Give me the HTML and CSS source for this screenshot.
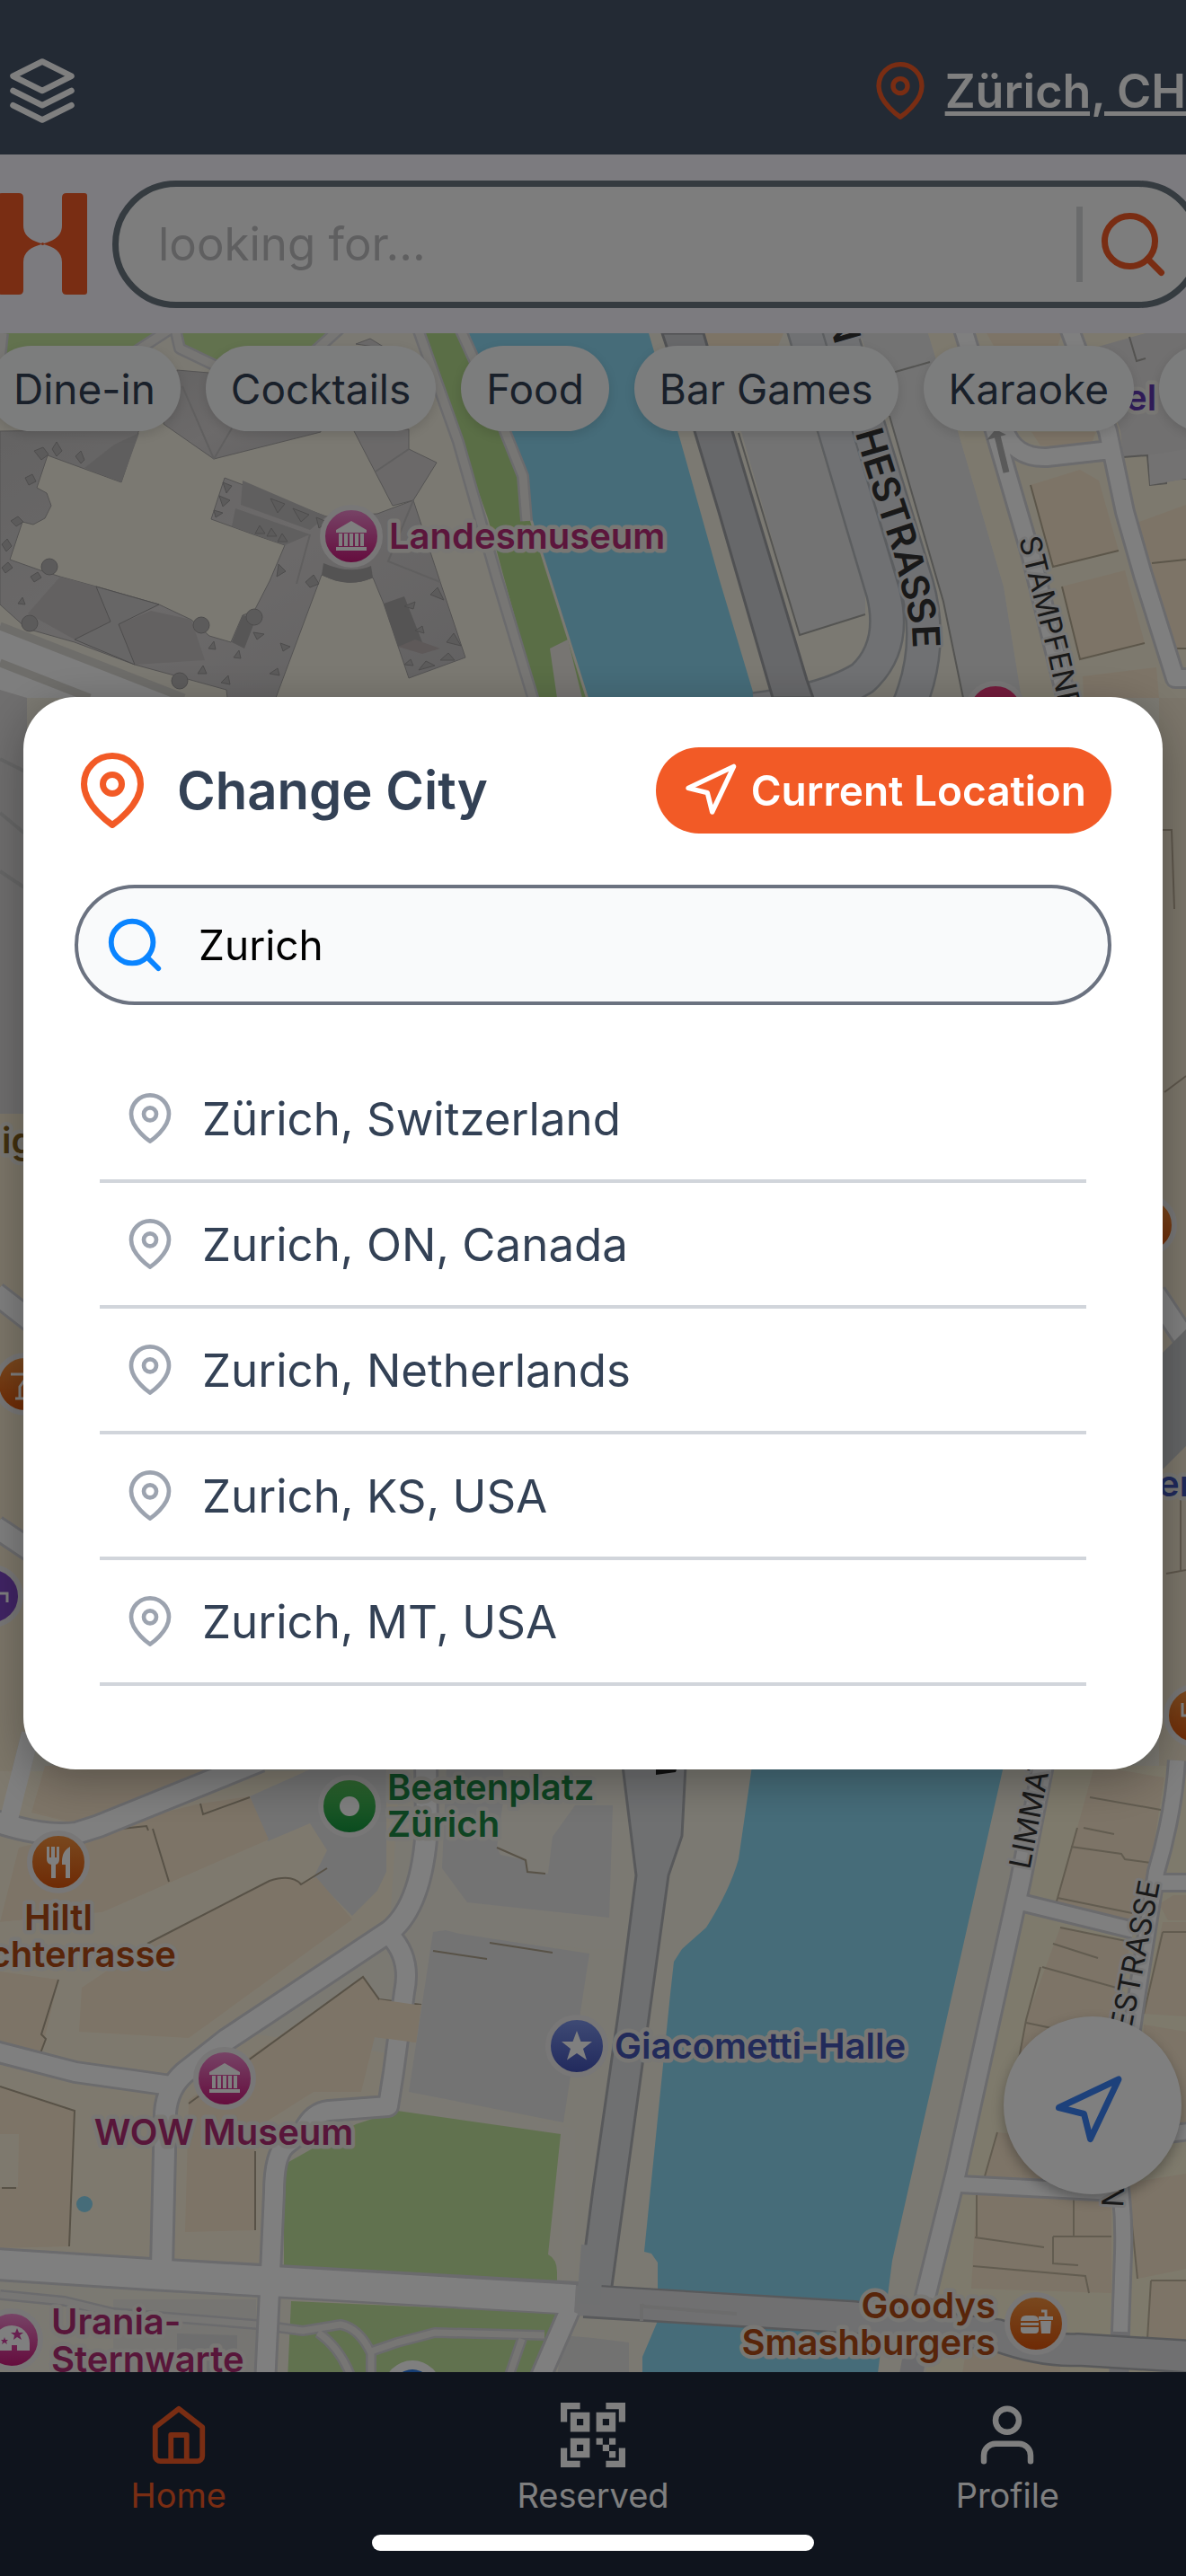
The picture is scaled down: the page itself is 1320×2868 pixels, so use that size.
FILE: index.html
```html
<!DOCTYPE html>
<html lang="en">
<head>
<meta charset="utf-8">
<meta name="viewport" content="width=device-width, initial-scale=1">
<title>Change City</title>
<link rel="stylesheet" href="styles.css">
</head>
<body>
<svg class="defs" aria-hidden="true">
  <defs>
    <symbol id="pin" viewBox="0 0 24 24"><path d="M21 10c0 7-9 13-9 13s-9-6-9-13a9 9 0 0 1 18 0z"/><circle cx="12" cy="10" r="3"/></symbol>
    <symbol id="search" viewBox="0 0 24 24"><circle cx="11" cy="11" r="8"/><path d="M21 21l-4.35-4.35"/></symbol>
    <symbol id="arrow" viewBox="0 0 24 24"><path d="M3 11L22 2L13 21L11 13Z"/></symbol>
    <linearGradient id="g-pink" x1="0" y1="0" x2="0" y2="1"><stop offset="0" stop-color="#f08cd0"/><stop offset="1" stop-color="#c81478"/></linearGradient>
    <linearGradient id="g-orange" x1="0" y1="0" x2="0" y2="1"><stop offset="0" stop-color="#f49440"/><stop offset="1" stop-color="#dc5208"/></linearGradient>
    <linearGradient id="g-green" x1="0" y1="0" x2="0" y2="1"><stop offset="0" stop-color="#60cc60"/><stop offset="1" stop-color="#10943c"/></linearGradient>
    <linearGradient id="g-blue" x1="0" y1="0" x2="0" y2="1"><stop offset="0" stop-color="#8098ec"/><stop offset="1" stop-color="#4050b8"/></linearGradient>
    <linearGradient id="g-roof" x1="0" y1="0" x2="1" y2="1"><stop offset="0" stop-color="#c8c6c6"/><stop offset=".5" stop-color="#d8d4d4"/><stop offset="1" stop-color="#c4c2c3"/></linearGradient>
    <symbol id="museum" viewBox="-20 -20 40 40"><path fill="#fff" d="M0-18L17-8V-5H-17V-8ZM-14-4h4v14h-4zM-8-4h4v14h-4zM-2-4h4v14h-4zM4-4h4v14h-4zM10-4h4v14h-4zM-17 11H17V15H-17Z"/></symbol>
    <path id="p-hestrasse" d="M943 452L962 517L978 567L995 618L1006 665L1015 698L1018 760"/>
    <path id="p-stampfen" d="M1134 600L1150 665L1166 728L1182 800L1200 890"/>
  </defs>
</svg>

<div class="app">
  <header class="topbar">
    <button class="icon-btn" aria-label="Layers">
      <svg class="icon icon-lg" viewBox="0 0 24 24"><path d="M12 2L2 7l10 5 10-5z"/><path d="M2 12l10 5 10-5"/><path d="M2 17l10 5 10-5"/></svg>
    </button>
    <a class="city" href="#city"><svg class="icon icon-md accent"><use href="#pin"/></svg><span>Zürich, CH</span></a>
  </header>

  <form class="searchbar">
    <svg class="logo" viewBox="0 0 99 113" aria-hidden="true"><path d="M0 4Q0 0 4 0H23Q28 0 28 5V36C28 48 37 53 49.500 56.500C62 53 71 48 71 36V5Q71 0 76 0H96Q99 0 99 3V110Q99 113 96 113H76Q71 113 71 108V77C71 65 62 60 49.500 56.500C37 60 28 65 28 77V108Q28 113 23 113H4Q0 113 0 109Z"/><circle cx="49.500" cy="56.500" r="1.500"/></svg>
    <div class="searchbox">
      <input type="text" placeholder="looking for..." aria-label="Search places">
      <button type="button" class="search-go" aria-label="Search"><svg class="icon icon-xl accent"><use href="#search"/></svg></button>
    </div>
  </form>

  <main class="map">
    <svg class="map-art" viewBox="0 371 1320 2270" preserveAspectRatio="xMidYMin slice" role="img" aria-label="Map of Zürich">
      <rect y="371" width="1320" height="2270" fill="#f6f2e4"/>

      <!-- parks north -->
      <g fill="#c4e49c">
        <path d="M5 371H185L150 392L0 430V371Z"/>
        <path d="M197 371H380L345 400L250 415L200 390Z"/>
        <path fill="#b4dc8c" d="M473 371H508L539 443L581 533L589 577L652 777H598L560 640L543 577L513 492Z"/>
      </g>
      <path d="M612 722l20-10 16 65h-28z" fill="#eeeae4"/>

      <!-- Limmat north -->
      <path d="M522 371L566 493L589 567L655 777H840L800 643L758 493L722 371Z" fill="#8cd8f2"/>

      <!-- footpaths north -->
      <g class="road-case"><path stroke-width="14" d="M0 400L3 371M150 392L190 366M195 366L200 388L250 412M345 396L378 366M465 366L510 492L552 640L594 780M512 366L548 445L582 530L586 580"/></g>
      <g class="road-fill"><path stroke="#f2f0ea" stroke-width="9" d="M0 400L3 371M150 392L190 366M195 366L200 388L250 412M345 396L378 366M465 366L510 492L552 640L594 780M512 366L548 445L582 530L586 580"/></g>

      <!-- railway yard -->
      <path d="M0 695L205 777H0Z" fill="#fcfcfc"/>
      <path d="M0 697L205 777M0 738L100 777" fill="none" stroke="#dcdad4" stroke-width="9"/>
      <path d="M0 768L30 777V1240H0Z" fill="#dedcdc"/>
      <path d="M0 845L30 860M0 905L30 930M0 970L30 990" fill="none" stroke="#cccccc" stroke-width="4"/>

      <!-- museum roofs -->
      <g fill="url(#g-roof)" stroke="#a8a6a6" stroke-width="1">
        <path d="M182 472L238 511L357 481L350 425L197 412Z"/>
        <path fill="#d6d3d3" d="M393 478L437 563L460 557L486 515L455 500V478ZM396 383L412 377L430 388Z"/>
        <path d="M0 480L155 478L135 537L53 507L41 543L52 549L57 563L50 577L37 584L25 581L11 623L45 635L67 642L107 653L177 673L213 690L233 708L257 715L270 685L283 680L300 647L317 607L282 595L235 578L250 532L297 550L363 575L420 572L460 557L490 648L518 732L455 755L427 672L415 643Q388 655 358 640L307 777H253L252 768L205 755L150 740L83 715L30 700L0 673Z"/>
      </g>
      <path d="M94 521L127 495L155 482L135 537Z" fill="#bfbdbd"/>
      <path d="M31 683L67 642L107 653L123 692L83 712Z" fill="#c6c2c2"/>
      <path d="M132 695L168 680L213 690L228 735L150 740Z" fill="#c6c2c2"/>
      <path d="M107 653L123 692L83 712L150 740L132 695L177 673Z" fill="#cfcdcd" stroke="#9a9898" stroke-width="1"/>
      <path d="M262 566L345 595L317 607L258 586ZM270 535L363 575L345 590L268 562Z" fill="#c0bebe"/>
      <path d="M427 672L450 664L470 715L443 720Z" fill="#aaa8a8"/>
      <path d="M443 720L462 712L490 722L470 728Z" fill="#bcb2b2"/>
      <path d="M360 627Q390 640 413 630L415 643Q388 656 358 640Z" fill="#a8a6a6"/>
      <path d="M270 685L285 688L272 722L258 715Z" fill="#aeacac"/>
      <path d="M238 511L203 430M238 511L262 470M455 500L418 525M460 557L432 625L490 648M345 595L330 650" fill="none" stroke="#c0bebe" stroke-width="2"/>
      <g fill="#b8b6b6" stroke="#9c9a9a" stroke-width="1">
        <circle cx="55" cy="631" r="9"/><circle cx="33" cy="694" r="9"/><circle cx="224" cy="696" r="9"/><circle cx="200" cy="758" r="9"/><circle cx="283" cy="687" r="9"/>
        <path d="M38 502l10-4 6 8-8 6zM58 500l5-8 6 10-6 6zM84 508l6-6 4 10-4 4zM28 532l8-4 4 8-8 4zM12 580l8-5 6 6-8 5zM2 606l6-6 5 8-6 6zM2 632l7-6 5 6-8 6zM34 642l8-5 4 6-8 5zM20 672l5-7 3 8z"/>
        <path d="M248 537l10 4-6 8zM244 552l12 5-8 7zM238 568l10 3-8 5zM301 555l16 6-8 10zM326 566l18 7-9 8zM352 576l12 5-9 7zM284 594l5-9 6 9zM297 597l5-9 6 9zM309 603l5-9 6 9zM310 628l8 8-10 6zM340 648l9-8 6 10-10 4z"/>
        <path d="M282 704l12 2-8 6zM312 716l11 4-8 5zM300 750l9-6 2 8zM246 760l8-8 2 10zM220 750l6-9 4 9zM232 722l6-8 2 9zM260 732l6-8 2 9zM479 662l8-8 7 14zM450 675l12-5-2 8zM462 702l8-5 2 8zM497 715l8-10 8 14zM450 740l7-6 3 7zM466 746l8-10 10 5zM490 735l9-8 7 8z"/>
      </g>

      <!-- Sihlquai streets and blocks -->
      <path d="M783 371H872L862 395L795 400Z" fill="#fae8cc"/>
      <path d="M957 371H1033L1067 483L1117 653L1137 777H1072L1050 670L990 463Z" fill="#e6e6e6"/>
      <path d="M822 470H905L963 660V684L890 707Z" fill="#e6e6e6"/>
      <path d="M822 482L890 707L963 684M990 463L1050 670L1072 777M993 415L1035 403" fill="none" stroke="#a8a8a4" stroke-width="2"/>
      <g fill="none" stroke="#b8bcc0" stroke-linejoin="round">
        <path stroke-width="40" d="M893 360L930 482L983 660Q998 720 960 755Q920 780 840 790"/>
        <path stroke-width="40" d="M932 360L968 480L1020 650Q1040 720 1010 790"/>
      </g>
      <g fill="none" stroke="#e0e2e6" stroke-linejoin="round">
        <path stroke-width="35" d="M893 360L930 482L983 660Q998 720 960 755Q920 780 840 790"/>
        <path stroke-width="35" d="M932 360L968 480L1020 650Q1040 720 1010 790"/>
      </g>
      <path d="M737 371H783L815 480L898 757L905 777H860L800 570L773 480Z" fill="#cfd0d4" stroke="#a0a2a6" stroke-width="3"/>

      <!-- east blocks north -->
      <path d="M1033 371H1320V777H1137L1117 653L1067 483Z" fill="#fbf3dc"/>
      <path d="M1215 388L1275 371H1320V533L1280 540L1277 507L1250 509L1247 480Z" fill="#e2e0e0"/>
      <path d="M1250 509L1277 507L1280 540L1298 538V533H1320M1257 375L1265 402L1275 399" fill="none" stroke="#a8a6a2" stroke-width="2"/>
      <path d="M1278 507L1320 500V533L1280 540Z" fill="#e6e4e4"/>
      <g class="beige">
        <path d="M1098 371H1182L1175 392H1110ZM1148 481H1220L1215 493L1190 498L1158 496ZM1147 540L1202 523L1223 535L1245 613L1172 631ZM1182 653L1252 635L1274 716L1202 734ZM1205 753L1287 743L1290 777H1206ZM1265 582L1320 562V720L1305 722L1282 640Z"/>
      </g>
      <path d="M1147 540L1172 631L1245 613M1182 653L1202 734L1274 716M1265 582L1282 640L1305 722H1320M1282 627L1320 623" fill="none" stroke="#b8ac94" stroke-width="2"/>
      <g class="road-case"><path stroke-width="24" d="M1070 360L1108 483L1148 620L1190 790M1118 478Q1128 510 1165 509L1245 500M1188 360L1233 480L1252 570L1272 640L1308 755H1330"/></g>
      <g class="road-fill"><path stroke-width="18" d="M1070 360L1108 483L1148 620L1190 790M1118 478Q1128 510 1165 509L1245 500M1188 360L1233 480L1252 570L1272 640L1308 755H1330"/></g>
      <path d="M1120 526L1110 485" fill="none" stroke="#b4b4b4" stroke-width="7"/><path d="M1098 490L1108 478L1120 484Z" fill="#b4b4b4"/>

      <!-- middle, either side -->
      <path d="M0 1240H30V1990H0Z" fill="#f8ecd2"/>
      <path d="M1290 777H1320V1990H1290Z" fill="#f6ebd4"/>
      <g class="road-case"><path stroke-width="28" d="M-5 1440L40 1475M-5 1700L40 1730M1285 1440L1325 1500"/><path stroke-width="20" d="M10 2025L34 1930"/></g>
      <g class="road-fill"><path stroke-width="22" d="M-5 1440L40 1475M-5 1700L40 1730M1285 1440L1325 1500"/></g>
      <path d="M1290 1510L1320 1480V1610L1290 1640Z" fill="#c8cacc"/>
      <path d="M1294 924H1304L1307 1012M1296 1216L1320 1198M1314 1660V1750M1298 1752L1320 1748" fill="none" stroke="#bcae98" stroke-width="2"/>

      <!-- south-west blocks -->
      <path d="M0 1972H445L434 2140L250 2260L460 2290L430 2345L340 2365L300 2400V2530L0 2520Z" fill="#fdf3dc"/>
      <path d="M278 2000L354 1966H430V2084L420 2105L392 2133L349 2090L364 2060L345 2030L298 2050Z" fill="#e6e6e6"/>
      <path d="M430 1966H690V2170H655L482 2151L470 2330L640 2370V2540L625 2544V2380L442 2350L448 2180L434 2150L470 2060Z" fill="#f6f2e6"/>
      <g fill="#e6e6e6">
        <path d="M497 1966H560V2005L553 2057L557 2065L585 2071L587 2084L610 2086L615 2045L640 2010H682L678 2135L520 2118L492 2080Z"/>
        <path d="M482 2151L496 2149L512 2153L656 2175L627 2363L455 2329Z"/>
      </g>
      <g class="beige">
        <path d="M50 1966H250L90 2032L35 2018ZM21 2057L223 2008L278 2000L299 2048L114 2129L0 2140ZM164 2164L300 2094Q325 2086 337 2097L352 2090L392 2137L210 2269L88 2262L91 2213ZM0 2195L65 2204L46 2285L0 2276ZM210 2338L404 2201L422 2226L469 2232L463 2274L417 2268L402 2329H349L284 2370V2483L206 2485ZM0 2323L83 2350L77 2501L0 2503Z"/>
      </g>
      <path d="M114 2129L0 2140V2170L164 2164L300 2094L265 2063Z" fill="#fdf3dc"/>
      <path d="M0 2376H21L20 2435H0Z" fill="#fdf3dc"/>
      <path d="M164 2164L300 2094Q325 2086 335 2098L364 2080M98 2040L163 2033L165 2038M223 2008L226 2020L278 2001M170 2036L188 2095M0 2323L83 2350L77 2501M284 2395V2483M210 2342L404 2201L422 2226L469 2232M65 2204L46 2265L51 2270L45 2286M482 2172L542 2181M545 2163L615 2174M553 2057L585 2071L587 2084L607 2086M2 2436H18" fill="none" stroke="#b0a48e" stroke-width="2"/>

      <!-- parks south -->
      <g fill="#c2e49e">
        <path d="M442 2350L624 2376L610 2510Q620 2515 620 2530V2544L316 2530V2410L396 2365Z"/>
        <path d="M324 2562L619 2575L589 2650H320Z"/>
      </g>
      <path d="M126 2560H285V2650H126Z" fill="#ecebe4"/><path d="M197 2598L264 2600V2650H197Z" fill="#dcdcdc"/>
      <path d="M625 2600L660 2603L700 2608V2650H620Z" fill="#e4e4e2"/>

      <!-- footpaths south -->
      <g class="road-case"><path stroke-width="12" d="M0 2555L72 2562L126 2575L286 2588L337 2595L379 2588Q400 2592 413 2620V2650M413 2618L442 2608L484 2597L606 2600M354 2597Q380 2615 392 2650M581 2604L565 2650"/></g>
      <g class="road-fill"><path stroke="#e2e2de" stroke-width="7" d="M0 2555L72 2562L126 2575L286 2588L337 2595L379 2588Q400 2592 413 2620V2650M413 2618L442 2608L484 2597L606 2600M354 2597Q380 2615 392 2650M581 2604L565 2650"/></g>

      <!-- Limmat south -->
      <path d="M837 1966L822 2070Q812 2105 786 2146L759 2170L750 2184L746 2220L717 2507L725 2509L732 2519V2584L715 2624V2650H976L993 2517L1117 1966Z" fill="#8cd8f2"/>

      <!-- east blocks south -->
      <path d="M1157 1966H1320V2650H1030L1040 2557L1074 2419Z" fill="#fcf4d8"/>
      <g class="beige">
        <path d="M1218 1966L1296 1979L1281 2073L1279 2146L1174 2124L1199 2035ZM1180 2146L1258 2162L1243 2254L1228 2350H1123L1142 2249ZM1110 2374L1169 2380V2428L1096 2423ZM1087 2441L1237 2448V2553L1081 2548ZM1294 2140H1320V2245L1273 2242ZM1273 2254L1320 2262V2380L1270 2400ZM1257 2430L1320 2420V2526L1266 2537ZM1281 2539H1320V2604H1277ZM1290 2120L1306 2110H1320V2138H1300ZM1078 2598L1180 2626V2650H1070Z"/>
      </g>
      <path d="M1213 2001L1292 2015M1206 2035L1240 2042M1192 2056L1248 2064L1252 2070L1281 2074M1177 2113L1260 2130M1180 2146L1258 2162M1172 2164L1222 2180M1160 2190L1246 2214M1199 2035L1174 2124M1158 2190L1142 2249L1123 2352M1142 2252L1180 2260M1110 2374L1096 2423M1087 2441V2490M1085 2491L1162 2502M1195 2441V2490M1172 2490H1237M1172 2490V2520L1200 2522M1083 2523L1208 2534L1212 2553M1294 2151H1320M1294 2151L1273 2242M1281 2539H1320M1281 2539L1277 2604M1257 2448L1266 2537" fill="none" stroke="#c4b8a0" stroke-width="2"/>

      <!-- streets south -->
      <path d="M693 1966L708 2088L689 2236L660 2437L644 2560H679L744 2088L759 2044L763 1966Z" fill="#dee0e3" stroke="#b0b2b6" stroke-width="3"/>
      <path d="M730 1966L753 1970L752 1973L730 1976Z" fill="#222"/>
      <g class="road-case">
        <path stroke-width="28" d="M-5 2028Q50 2046 85 2041L110 2033L290 1960M474 1960L475 2035Q470 2120 434 2150L252 2271L205 2308Q186 2325 184 2352L180 2525"/>
        <path stroke-width="26" d="M434 2155Q458 2180 450 2218L438 2307L432 2345L366 2350Q348 2352 338 2372L318 2388Q305 2400 305 2441L301 2530L295 2655M-5 2284L84 2307L190 2322"/>
        <path stroke-width="38" d="M-5 2521L168 2532L660 2560"/>
        <path stroke-width="26" d="M634 2572L598 2655M1162 1960L1136 2093L1064 2419L1030 2557L1012 2655"/>
        <path stroke-width="22" d="M1136 2118L1262 2149M1068 2432L1241 2441M1310 1960Q1306 2020 1287 2084L1266 2218L1240 2396Q1252 2450 1250 2508L1245 2655M1290 2096H1330M1300 2376L1330 2372"/>
      </g>
      <path d="M650 2562L950 2580L1110 2600Q1160 2618 1200 2616L1330 2624" fill="none" stroke="#b0b2b6" stroke-width="38"/>
      <path d="M640 2561L950 2580L1110 2600Q1160 2618 1200 2616L1330 2624" fill="none" stroke="#e0e1e3" stroke-width="33"/>
      <path d="M660 2500L655 2565" stroke="#dee0e3" stroke-width="26" fill="none"/>
      <g class="road-fill">
        <path stroke-width="22" d="M-5 2028Q50 2046 85 2041L110 2033L290 1960M474 1960L475 2035Q470 2120 434 2150L252 2271L205 2308Q186 2325 184 2352L180 2525"/>
        <path stroke-width="20" d="M434 2155Q458 2180 450 2218L438 2307L432 2345L366 2350Q348 2352 338 2372L318 2388Q305 2400 305 2441L301 2530L295 2655M-5 2284L84 2307L190 2322M10 2025L34 1930"/>
        <path stroke-width="32" d="M-5 2521L168 2532L640 2560"/>
        <path stroke-width="20" d="M634 2572L598 2655M1162 1960L1136 2093L1064 2419L1030 2557"/>
        <path stroke-width="16" d="M1136 2118L1262 2149M1068 2432L1241 2441M1310 1960Q1306 2020 1287 2084L1266 2218L1240 2396Q1252 2450 1250 2508L1247 2596M1290 2096H1330M1300 2376L1330 2372"/>
      </g>
      <path d="M463 2232L469 2232L463 2274L417 2268L422 2226Z" class="beige"/>
      <path d="M714 2584V2565M714 2566L718 2568L820 2576" fill="none" stroke="#d8d8d8" stroke-width="4"/>
      <circle cx="94" cy="2454" r="9" fill="#8cd8f2"/>
      <circle cx="459" cy="2660" r="32" fill="#fff"/><circle cx="459" cy="2660" r="22" fill="#2c7ce8"/>

      <!-- street names -->
      <g class="street">
        <text class="street-lg"><textPath href="#p-hestrasse">CHESTRASSE</textPath></text>
        <text class="street-lg" transform="translate(921 354) rotate(74)">N</text>
        <text><textPath href="#p-stampfen">STAMPFENBACH</textPath></text>
        <text transform="translate(1146 2082) rotate(-79)">LIMMAT</text>
        <text transform="translate(1291 2096) rotate(-79)" text-anchor="end">GESTRASSE</text>
        <text transform="translate(1250 2458) rotate(-87)">N</text>
      </g>

      <!-- place markers -->
      <g class="marker">
        <circle cx="391" cy="597" r="32" fill="url(#g-pink)"/><use href="#museum" x="371" y="578" width="40" height="40"/>
        <circle cx="1108" cy="793" r="32" fill="#e83878"/>
        <circle cx="1275" cy="1364" r="32" fill="url(#g-orange)"/>
        <circle cx="28" cy="1541" r="32" fill="url(#g-orange)"/><path class="line" d="M12 1530h20l-10 14v12M17 1557h10"/>
        <circle cx="-9" cy="1777" r="32" fill="#8048c8"/><path class="line" d="M-4 1774h12v10"/>
        <circle cx="1330" cy="1910" r="32" fill="url(#g-orange)"/><path class="line" d="M1316 1896v14h8"/>
        <circle cx="389" cy="2011" r="32" fill="url(#g-green)"/><circle class="glyph" cx="389" cy="2011" r="11"/>
        <circle cx="65" cy="2073" r="32" fill="url(#g-orange)"/>
        <path class="glyph" d="M52 2056h3v12h2v-12h4v12h2v-12h3v14q0 5-4 6v15h-5v-15q-5-1-5-6zM78 2056v35h-5v-15h-4q-1-15 9-20z"/>
        <circle cx="250" cy="2314" r="32" fill="url(#g-pink)"/><use href="#museum" x="230" y="2295" width="40" height="40"/>
        <circle cx="642" cy="2278" r="32" fill="url(#g-blue)"/><path class="glyph" d="M642 2261l4.500 12h12.500l-10 8 4 12.500-11-7.500-11 7.500 4-12.500-10-8h12.500z"/>
        <circle cx="13" cy="2605" r="32" fill="url(#g-pink)"/>
        <path class="glyph" d="M-7 2617v-8a20 20 0 0 1 40 0v8h-14v-6h-6v6z"/><path fill="#d040a0" d="M19 2592l2 5h5l-4 3 2 5-5-3-4 3 1-5-4-3h5zM5 2602l1 3h3l-2 2 1 3-3-2-3 2 1-3-2-2h3z"/>
        <circle cx="1153" cy="2587" r="32" fill="url(#g-orange)"/>
        <path class="glyph" d="M1136 2584q0-6 6-6h8q6 0 6 6zM1136 2586h20v3h-20zM1136 2591h20v3q0 4-4 4h-12q-4 0-4-4zM1156 2579h16v4h-16zM1158 2584h12l-1 14h-10z"/><path class="line" d="M1164 2579v-6h-5"/>
      </g>

      <!-- place names -->
      <g class="place">
        <text x="433" y="611" fill="#b82c78">Landesmuseum</text>
        <text x="1253" y="457" fill="#6038b0">el</text>
        <text x="2" y="1284" fill="#84601c">ig</text>
        <text x="1289" y="1666" fill="#4054b8">en</text>
        <text x="431" y="2004" fill="#1c8844">Beatenplatz</text>
        <text x="431" y="2045" fill="#1c8844">Zürich</text>
        <text x="65" y="2149" fill="#b04a14" text-anchor="middle">Hiltl</text>
        <text x="196" y="2190" fill="#b04a14" text-anchor="end">Dachterrasse</text>
        <text x="249" y="2388" fill="#b02c74" text-anchor="middle">WOW Museum</text>
        <text x="684" y="2292" fill="#4456b4">Giacometti-Halle</text>
        <text x="57" y="2599" fill="#b02c74">Urania-</text>
        <text x="57" y="2641" fill="#b02c74">Sternwarte</text>
        <text x="1108" y="2581" fill="#b04a14" text-anchor="end">Goodys</text>
        <text x="1108" y="2622" fill="#b04a14" text-anchor="end">Smashburgers</text>
      </g>
    </svg>

    <div class="chips">
      <button>Dine-in</button>
      <button>Cocktails</button>
      <button>Food</button>
      <button>Bar Games</button>
      <button>Karaoke</button>
      <button>Live Music</button>
    </div>
    <button class="locate" aria-label="My location"><svg class="icon icon-xl"><use href="#arrow"/></svg></button>
  </main>

  <nav class="tabs">
    <a class="active" href="#home">
      <svg class="icon icon-tab" viewBox="0 0 24 24"><path d="M3 9l9-7 9 7v11a2 2 0 0 1-2 2H5a2 2 0 0 1-2-2z"/><path d="M9 22V12h6v10"/></svg>
      <span>Home</span>
    </a>
    <a href="#reserved">
      <svg class="icon-qr" viewBox="0 0 20 20"><path fill-rule="evenodd" d="M0 0H6V2H2V6H0ZM14 0H20V6H18V2H14ZM0 14H2V18H6V20H0ZM18 14H20V20H14V18H18ZM3 3H9V9H3ZM5 5V7H7V5ZM11 3H17V9H11ZM13 5V7H15V5ZM3 11H9V17H3ZM5 13V15H7V13ZM11 11H13V13H11ZM15 11H17V13H15ZM13 13H15V15H13ZM15 15H17V17H15Z"/></svg>
      <span>Reserved</span>
    </a>
    <a href="#profile">
      <svg class="icon icon-lg" viewBox="0 0 24 24"><path d="M20 21v-2a4 4 0 0 0-4-4H8a4 4 0 0 0-4 4v2"/><circle cx="12" cy="7" r="4"/></svg>
      <span>Profile</span>
    </a>
  </nav>
</div>

<div class="scrim">
  <section class="dialog" role="dialog" aria-modal="true" aria-labelledby="dialog-title">
    <div class="dialog-head">
      <svg class="icon icon-xl"><use href="#pin"/></svg>
      <h1 id="dialog-title">Change City</h1>
      <button class="current"><svg class="icon icon-md"><use href="#arrow"/></svg>Current Location</button>
    </div>
    <label class="field">
      <svg class="icon icon-tab"><use href="#search"/></svg>
      <input type="text" value="Zurich" aria-label="City">
    </label>
    <ul class="results">
      <li><button><svg class="icon icon-sm"><use href="#pin"/></svg>Zürich, Switzerland</button></li>
      <li><button><svg class="icon icon-sm"><use href="#pin"/></svg>Zurich, ON, Canada</button></li>
      <li><button><svg class="icon icon-sm"><use href="#pin"/></svg>Zurich, Netherlands</button></li>
      <li><button><svg class="icon icon-sm"><use href="#pin"/></svg>Zurich, KS, USA</button></li>
      <li><button><svg class="icon icon-sm"><use href="#pin"/></svg>Zurich, MT, USA</button></li>
    </ul>
  </section>
  <div class="home-indicator"></div>
</div>
</body>
</html>
```

FILE: styles.css
```css
* {
  box-sizing: border-box;
}

body {
  margin: 0;
  font-family: Inter, "Liberation Sans", sans-serif;
  color: #334155;
}

button,
input {
  font: inherit;
  color: inherit;
  border: 0;
  padding: 0;
  background: none;
}

input {
  min-width: 0;
  outline: 0;
}

a {
  color: inherit;
  text-decoration: none;
}

.defs {
  position: absolute;
  width: 0;
  height: 0;
}

.icon {
  flex: none;
  display: block;
  fill: none;
  stroke: currentColor;
  stroke-width: 2;
  stroke-linecap: round;
  stroke-linejoin: round;
}

.icon-sm { width: 56px; height: 56px; }
.icon-md { width: 64px; height: 64px; }
.icon-tab { width: 70px; height: 70px; }
.icon-lg { width: 78px; height: 78px; }
.icon-xl { width: 84px; height: 84px; }

.accent {
  color: #f25a26;
}

/* Page behind the dialog */

.app {
  display: flex;
  flex-direction: column;
  min-height: 100vh;
  overflow: hidden;
}

.topbar {
  display: flex;
  align-items: flex-end;
  justify-content: space-between;
  height: 172px;
  padding: 0 0 32px 8px;
  background: #475569;
  color: #fff;
}

.city {
  display: flex;
  align-items: center;
  gap: 18px;
  height: 78px;
  font-size: 52px;
  font-weight: 600;
  white-space: nowrap;
}

.city span {
  text-decoration: underline;
  text-decoration-thickness: 5px;
  text-underline-offset: 4px;
}

.searchbar {
  display: flex;
  align-items: center;
  gap: 28px;
  height: 199px;
  margin: 0 -18px 0 -2px;
  background: #f9f6ff;
}

.logo {
  flex: none;
  width: 99px;
  height: 113px;
  fill: #f25a26;
}

.searchbox {
  flex: 1;
  display: flex;
  align-items: center;
  height: 142px;
  padding: 0 28px 0 44px;
  border: 7px solid #6a7680;
  border-radius: 71px;
  background: #fafafa;
  font-size: 51px;
}

.searchbox input {
  flex: 1;
}

.searchbox input::placeholder {
  color: #bebec0;
  opacity: 1;
}

.search-go {
  padding: 0 0 0 14px;
  border-left: 7px solid #d4d6d9;
}

.map {
  position: relative;
  flex: 1;
  overflow: hidden;
}

.map-art {
  position: absolute;
  inset: 0;
  width: 100%;
  height: 100%;
}

.road-case path,
.road-fill path {
  fill: none;
  stroke-linejoin: round;
}

.road-case path { stroke: #d6d6da; }
.road-fill path { stroke: #fff; }
.road-fill path[stroke] { stroke: #efede8; }
.beige { fill: #fae8ce; }

.street text {
  font-size: 33px;
  fill: #333;
  stroke: #eeeeee;
  stroke-width: 6px;
  stroke-linejoin: round;
  paint-order: stroke;
}

.street .street-lg {
  font-size: 42px;
  font-weight: 600;
  stroke: #e0e2e6;
}

.marker > circle {
  stroke: #f0eeee;
  stroke-width: 6px;
}

.marker .glyph {
  fill: #fff;
  stroke: none;
}

.marker .line {
  fill: none;
  stroke: #fff;
  stroke-width: 3px;
}

.place text {
  font-size: 40px;
  font-weight: 600;
  stroke: #f0eee8;
  stroke-width: 9px;
  stroke-linejoin: round;
  paint-order: stroke;
}

.chips {
  position: relative;
  display: flex;
  gap: 28px;
  margin: 14px 0 0 -13px;
}

.chips button {
  flex: none;
  height: 95px;
  padding: 0 28px;
  border-radius: 48px;
  background: #f9fafb;
  box-shadow: 0 4px 12px rgba(0, 0, 0, 0.12);
  font-size: 46px;
}

.locate {
  position: absolute;
  right: 5px;
  bottom: 198px;
  display: grid;
  place-items: center;
  width: 198px;
  height: 198px;
  padding: 12px 12px 0 0;
  border-radius: 50%;
  background: #fff;
  color: #3b82f6;
  box-shadow: 0 6px 14px rgba(0, 0, 0, 0.3);
}

.tabs {
  display: grid;
  grid-template-columns: repeat(3, 1fr);
  height: 227px;
  margin: 0 -32px;
  padding-top: 29px;
  background: #1e293b;
  color: #fff;
  font-size: 38px;
}

.tabs a {
  display: grid;
  grid-template-rows: 82px 52px;
  align-content: start;
  justify-items: center;
  align-items: center;
}

.tabs .active {
  color: #f25a26;
}

.icon-qr {
  width: 72px;
  height: 72px;
  fill: currentColor;
}

/* Dialog layer */

.scrim {
  position: fixed;
  inset: 0;
  display: flex;
  flex-direction: column;
  align-items: center;
  justify-content: center;
  padding: 0 26px 122px;
  background: rgba(0, 0, 0, 0.5);
}

.dialog {
  width: 100%;
  padding: 56px 57px 93px;
  border-radius: 58px;
  background: #fff;
  box-shadow: 0 12px 50px rgba(0, 0, 0, 0.3);
}

.dialog-head {
  display: flex;
  align-items: center;
  gap: 30px;
  height: 96px;
  margin-bottom: 57px;
  color: #f25a26;
}

.dialog-head h1 {
  flex: 1;
  margin: 0;
  font-size: 58px;
  font-weight: 600;
  color: #334155;
}

.current {
  display: flex;
  align-items: center;
  gap: 14px;
  height: 96px;
  padding: 0 28px;
  border-radius: 48px;
  background: #f25a26;
  color: #fff;
  font-size: 46px;
  font-weight: 600;
  white-space: nowrap;
}

.field {
  display: flex;
  align-items: center;
  gap: 36px;
  height: 134px;
  padding: 0 28px;
  border: 4px solid #6b7280;
  border-radius: 67px;
  background: #f9fafb;
  color: #0a84ff;
  font-size: 46px;
}

.field input {
  flex: 1;
  color: #000;
}

.results {
  margin: 58px 28px 0;
  padding: 0;
  list-style: none;
}

.results li {
  border-bottom: 4px solid #d1d5db;
}

.results button {
  display: flex;
  align-items: center;
  gap: 30px;
  width: 100%;
  height: 136px;
  padding: 0 28px;
  font-size: 51px;
}

.results .icon {
  color: #9ca3af;
}

.home-indicator {
  position: absolute;
  bottom: 28px;
  left: 50%;
  width: 492px;
  height: 18px;
  margin-left: -246px;
  border-radius: 9px;
  background: #fff;
}
```
